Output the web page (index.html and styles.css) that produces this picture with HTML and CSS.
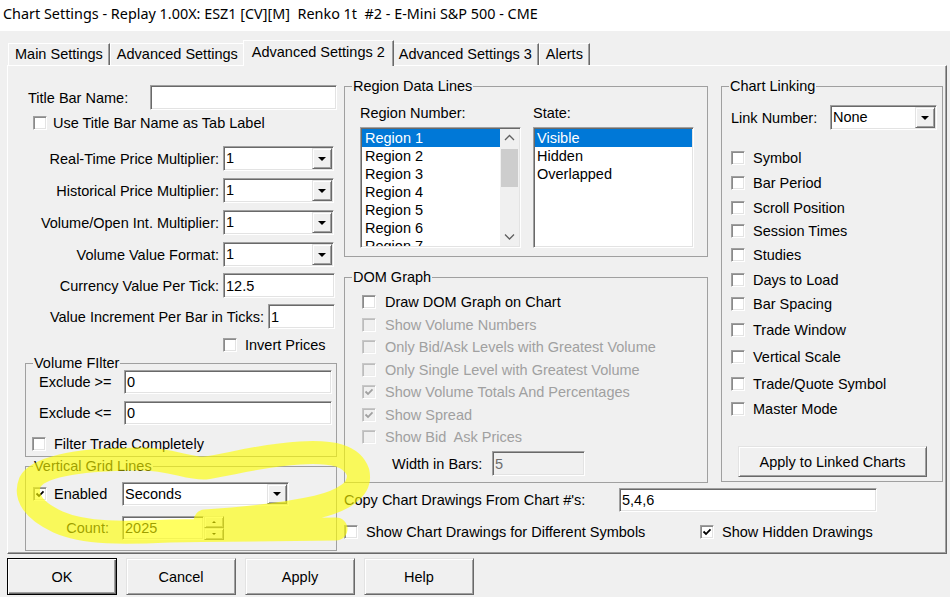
FILE: index.html
```html
<!DOCTYPE html>
<html lang="en">
<head>
<meta charset="utf-8">
<title>Chart Settings</title>
<link rel="stylesheet" href="styles.css">
</head>
<body>
<div class="window">
  <div class="titlebar">Chart Settings - Replay 1.00X: ESZ1 [CV][M]  Renko 1t  #2 - E-Mini S&amp;P 500 - CME</div>

  <div class="tabs">
    <div class="tab">Main Settings</div>
    <div class="tab">Advanced Settings</div>
    <div class="tab active">Advanced Settings 2</div>
    <div class="tab">Advanced Settings 3</div>
    <div class="tab">Alerts</div>
  </div>

  <div class="panel">
    <div class="col-left">
      <div class="title-row"><span class="title-lbl">Title Bar Name:</span><span class="edit title-edit"></span></div>
      <div class="chk use-title"><span class="cb"></span><span>Use Title Bar Name as Tab Label</span></div>

      <div class="frow first"><span class="rlbl">Real-Time Price Multiplier:</span><span class="combo mult"><span class="val">1</span><span class="drop"><i class="tri"></i></span></span></div>
      <div class="frow"><span class="rlbl">Historical Price Multiplier:</span><span class="combo mult"><span class="val">1</span><span class="drop"><i class="tri"></i></span></span></div>
      <div class="frow"><span class="rlbl">Volume/Open Int. Multiplier:</span><span class="combo mult"><span class="val">1</span><span class="drop"><i class="tri"></i></span></span></div>
      <div class="frow"><span class="rlbl">Volume Value Format:</span><span class="combo mult"><span class="val">1</span><span class="drop"><i class="tri"></i></span></span></div>
      <div class="frow tight"><span class="rlbl">Currency Value Per Tick:</span><span class="edit cur">12.5</span></div>
      <div class="frow tight"><span class="rlbl wide">Value Increment Per Bar in Ticks:</span><span class="edit inc">1</span></div>
      <div class="chk invert"><span class="cb"></span><span>Invert Prices</span></div>

      <div class="group vfilter">
        <div class="gtitle">Volume FIlter</div>
        <div class="xrow"><span class="xlbl">Exclude &gt;=</span><span class="edit xedit">0</span></div>
        <div class="xrow second"><span class="xlbl">Exclude &lt;=</span><span class="edit xedit">0</span></div>
        <div class="chk ftrade"><span class="cb"></span><span>Filter Trade Completely</span></div>
      </div>

      <div class="group vgrid">
        <div class="gtitle">Vertical Grid Lines</div>
        <div class="grow enabled">
          <span class="cb on"><svg width="10" height="10" viewBox="0 0 10 10"><path d="M1.5 4.5 L4 7 L8.5 2.3" fill="none" stroke="#000" stroke-width="1.8"/></svg></span>
          <span class="glbl">Enabled</span>
          <span class="combo secs"><span class="val">Seconds</span><span class="drop"><i class="tri"></i></span></span>
        </div>
        <div class="grow count">
          <span class="clbl">Count:</span>
          <span class="spin"><span class="edit sedit">2025</span><span class="sbtns"><span class="sb"><i class="tri-up"></i></span><span class="sb"><i class="tri-dn"></i></span></span></span>
        </div>
      </div>
    </div>

    <div class="col-right">
      <div class="upper">
        <div class="mid">
          <div class="group region">
            <div class="gtitle">Region Data Lines</div>
            <div class="rlabels"><span class="rn">Region Number:</span><span>State:</span></div>
            <div class="lists">
              <div class="edit listbox">
                <div class="items">
                  <div class="item sel">Region 1</div>
                  <div class="item">Region 2</div>
                  <div class="item">Region 3</div>
                  <div class="item">Region 4</div>
                  <div class="item">Region 5</div>
                  <div class="item">Region 6</div>
                  <div class="item">Region 7</div>
                </div>
                <div class="vscroll">
                  <span class="sbar-btn"><svg width="19" height="19" viewBox="0 0 19 19"><path d="M5 11 L9.5 6.5 L14 11" fill="none" stroke="#606060" stroke-width="1.3"/></svg></span>
                  <span class="thumb"></span>
                  <span class="sbar-fill"></span>
                  <span class="sbar-btn"><svg width="19" height="19" viewBox="0 0 19 19"><path d="M5 7.5 L9.5 12 L14 7.5" fill="none" stroke="#606060" stroke-width="1.3"/></svg></span>
                </div>
              </div>
              <div class="edit listbox">
                <div class="items state">
                  <div class="item sel">Visible</div>
                  <div class="item">Hidden</div>
                  <div class="item">Overlapped</div>
                </div>
              </div>
            </div>
          </div>

          <div class="group dom">
            <div class="gtitle">DOM Graph</div>
            <div class="chk drow first"><span class="cb"></span><span>Draw DOM Graph on Chart</span></div>
            <div class="chk drow dis"><span class="cb"></span><span>Show Volume Numbers</span></div>
            <div class="chk drow dis"><span class="cb"></span><span>Only Bid/Ask Levels with Greatest Volume</span></div>
            <div class="chk drow dis"><span class="cb"></span><span>Only Single Level with Greatest Volume</span></div>
            <div class="chk drow dis"><span class="cb"><svg width="10" height="10" viewBox="0 0 10 10"><path d="M1.5 4.5 L4 7 L8.5 2.3" fill="none" stroke="#a0a0a0" stroke-width="1.8"/></svg></span><span>Show Volume Totals And Percentages</span></div>
            <div class="chk drow dis"><span class="cb"><svg width="10" height="10" viewBox="0 0 10 10"><path d="M1.5 4.5 L4 7 L8.5 2.3" fill="none" stroke="#a0a0a0" stroke-width="1.8"/></svg></span><span>Show Spread</span></div>
            <div class="chk drow dis"><span class="cb"></span><span>Show Bid  Ask Prices</span></div>
            <div class="wrow"><span class="wlbl">Width in Bars:</span><span class="edit wedit">5</span></div>
          </div>
        </div>

        <div class="group linking">
          <div class="gtitle">Chart Linking</div>
          <div class="lnrow"><span class="lnlbl">Link Number:</span><span class="combo link"><span class="val">None</span><span class="drop"><i class="tri"></i></span></span></div>
          <div class="lrows">
            <div class="chk lrow"><span class="cb"></span><span>Symbol</span></div>
            <div class="chk lrow"><span class="cb"></span><span>Bar Period</span></div>
            <div class="chk lrow"><span class="cb"></span><span>Scroll Position</span></div>
            <div class="chk lrow"><span class="cb"></span><span>Session Times</span></div>
            <div class="chk lrow"><span class="cb"></span><span>Studies</span></div>
            <div class="chk lrow"><span class="cb"></span><span>Days to Load</span></div>
            <div class="chk lrow"><span class="cb"></span><span>Bar Spacing</span></div>
            <div class="chk lrow"><span class="cb"></span><span>Trade Window</span></div>
            <div class="chk lrow"><span class="cb"></span><span>Vertical Scale</span></div>
            <div class="chk lrow"><span class="cb"></span><span>Trade/Quote Symbol</span></div>
            <div class="chk lrow"><span class="cb"></span><span>Master Mode</span></div>
          </div>
          <div class="btn apply-linked">Apply to Linked Charts</div>
        </div>
      </div>

      <div class="copy-row"><span class="copy-lbl">Copy Chart Drawings From Chart #'s:</span><span class="edit copy-edit">5,4,6</span></div>
      <div class="draw-row">
        <div class="chk diff"><span class="cb"></span><span>Show Chart Drawings for Different Symbols</span></div>
        <div class="chk"><span class="cb"><svg width="10" height="10" viewBox="0 0 10 10"><path d="M1.5 4.5 L4 7 L8.5 2.3" fill="none" stroke="#000" stroke-width="1.8"/></svg></span><span>Show Hidden Drawings</span></div>
      </div>
    </div>
  </div>

  <div class="buttons">
    <div class="btn default">OK</div>
    <div class="btn">Cancel</div>
    <div class="btn">Apply</div>
    <div class="btn">Help</div>
  </div>

  <svg class="marker" width="950" height="597" viewBox="0 0 950 597">
    <path d="M 336 529 C 295 530, 230 530, 170 531 C 125 533, 85 534, 58 522 C 34 511, 24 497, 30 482 C 40 464, 90 459, 140 459 C 172 459, 188 469, 205 468 C 228 465, 262 455, 300 453 C 334 451, 352 456, 358 472 C 362 490, 342 501, 317 507 C 290 513, 250 518, 205 521" fill="none" stroke="rgb(255,255,0)" stroke-opacity="0.62" stroke-width="23" stroke-linecap="round" stroke-linejoin="round"/>
  </svg>
</div>
</body>
</html>
```

FILE: styles.css
```css
* { box-sizing: border-box; }
html, body { margin: 0; padding: 0; }
body {
  width: 950px;
  height: 597px;
  overflow: hidden;
  background: #f0f0f0;
  font-family: "Liberation Sans", Arial, sans-serif;
  font-size: 14.5px;
  color: #000;
}
.window { position: relative; width: 950px; height: 597px; background: #f0f0f0; }

.titlebar {
  height: 31px;
  background: #fff;
  padding-left: 3px;
  font-family: "Noto Sans", "Liberation Sans", sans-serif;
  font-size: 14.4px;
  line-height: 28px;
  white-space: pre;
}

/* tabs */
.tabs {
  position: relative;
  z-index: 2;
  display: flex;
  align-items: flex-end;
  height: 34px;
  padding: 12px 0 0 8px;
}
.tab {
  height: 22px;
  padding: 0 6px;
  line-height: 20px;
  white-space: nowrap;
  background: #f0f0f0;
  border-top: 1px solid #fff;
  border-left: 1px solid #fff;
  border-right: 1px solid #696969;
  box-shadow: inset -1px 0 0 #a0a0a0;
}
.tab.active {
  position: relative;
  z-index: 3;
  height: 26px;
  margin: 0 -2px -1px;
  padding: 0 8px;
  line-height: 22px;
}

/* panel */
.panel {
  display: flex;
  width: 940px;
  height: 489px;
  margin-left: 7px;
  border: 1px solid;
  border-color: #fff #696969 #696969 #fff;
  box-shadow: inset -1px -1px 0 #a0a0a0;
}

/* common controls */
.edit, .combo, .listbox {
  display: flex;
  align-items: center;
  background: #fff;
  border: 1px solid;
  border-color: #a0a0a0 #fff #fff #a0a0a0;
  box-shadow: inset 1px 1px 0 #696969, inset -1px -1px 0 #e3e3e3;
  white-space: nowrap;
}
.edit { padding: 0 2px 0 2px; }
.combo { height: 25px; padding: 1px; }
.combo .val { flex: 1; padding-left: 1px; line-height: 21px; }
.drop, .sb, .btn {
  background: #f0f0f0;
  border: 1px solid;
  border-color: #e3e3e3 #696969 #696969 #e3e3e3;
  box-shadow: inset 1px 1px 0 #fff, inset -1px -1px 0 #a0a0a0;
}
.drop {
  width: 20px;
  height: 21px;
  display: flex;
  align-items: center;
  justify-content: center;
}
.tri {
  display: block;
  width: 0;
  height: 0;
  border-left: 4px solid transparent;
  border-right: 4px solid transparent;
  border-top: 4px solid #000;
}
.tri-up, .tri-dn {
  display: block;
  width: 0;
  height: 0;
  border-left: 2px solid transparent;
  border-right: 2px solid transparent;
}
.tri-up { border-bottom: 2px solid #000; }
.tri-dn { border-top: 2px solid #000; }

.chk { display: flex; align-items: center; white-space: pre; }
.cb {
  flex: 0 0 14px;
  width: 14px;
  height: 14px;
  display: flex;
  align-items: center;
  justify-content: center;
  background: #fff;
  border: 1px solid;
  border-color: #a0a0a0 #fff #fff #a0a0a0;
  box-shadow: inset 1px 1px 0 #8a8a8a, inset -1px -1px 0 #e3e3e3;
}
.chk .cb + span { margin-left: 8px; }
.dis { color: #a0a0a0; }
.dis .cb {
  background: #f0f0f0;
  border-color: #c8c8c8 #fff #fff #c8c8c8;
  box-shadow: inset 1px 1px 0 #bcbcbc, inset -1px -1px 0 #ececec;
}

.group { border: 1px solid #a0a0a0; }
.gtitle {
  width: max-content;
  height: 14px;
  line-height: 14px;
  margin: -8px 0 0 7px;
  padding: 0 1px;
  background: #f0f0f0;
  white-space: nowrap;
}

.btn {
  display: flex;
  align-items: center;
  justify-content: center;
  white-space: nowrap;
}

/* left column */
.col-left {
  flex: 0 0 330px;
  padding-left: 17px;
  display: flex;
  flex-direction: column;
}
.title-row { display: flex; align-items: center; height: 25px; margin-top: 19px; }
.title-lbl { width: 125px; padding-left: 3px; }
.title-edit { width: 187px; height: 25px; }
.use-title { height: 16px; margin-top: 5px; padding-left: 8px; }
.use-title .cb + span { margin-left: 6px; }

.frow { display: flex; align-items: center; height: 25px; margin-top: 7px; }
.frow.first { margin-top: 15px; }
.frow.tight { margin-top: 6px; }
.rlbl { width: 194px; margin-right: 4px; text-align: right; white-space: nowrap; }
.rlbl.wide { width: 239px; }
.combo.mult { width: 111px; }
.edit.cur { width: 112px; height: 25px; }
.edit.inc { width: 67px; height: 25px; }
.invert { height: 14px; margin-top: 9px; padding-left: 198px; }

.vfilter { width: 312px; margin-top: 11px; padding-bottom: 4px; }
.xrow { display: flex; align-items: center; height: 24px; padding-left: 13px; }
.xrow.second { margin-top: 7px; }
.xlbl { width: 85px; white-space: pre; }
.xedit { width: 208px; height: 24px; }
.ftrade { height: 16px; margin-top: 11px; padding-left: 6px; }

.vgrid { width: 312px; margin-top: 9px; padding-bottom: 10px; }
.grow { display: flex; align-items: center; height: 24px; }
.grow.enabled { margin-top: 9px; padding-left: 7px; }
.glbl { width: 68px; margin-left: 7px; }
.combo.secs { width: 167px; height: 24px; }
.combo.secs .drop { height: 20px; }
.grow.count { margin-top: 10px; }
.clbl { width: 83px; margin-right: 13px; text-align: right; }
.spin { display: flex; width: 102px; height: 24px; }
.sedit { flex: 1; height: 24px; }
.sbtns { width: 20px; display: flex; flex-direction: column; }
.sb { flex: 1; display: flex; align-items: center; justify-content: center; }

/* right side */
.col-right {
  flex: 0 0 599px;
  margin-left: 6px;
  display: flex;
  flex-direction: column;
}
.upper { display: flex; align-items: flex-start; }
.mid { width: 364px; display: flex; flex-direction: column; }

.region { margin-top: 20px; }
.rlabels { display: flex; height: 16px; line-height: 16px; margin-top: 12px; padding-left: 15px; }
.rlabels .rn { width: 173px; }
.lists { display: flex; gap: 12px; margin-top: 6px; padding: 0 0 8px 15px; }
.listbox {
  width: 161px;
  height: 121px;
  padding: 1px;
  align-items: stretch;
  overflow: hidden;
}
.items { flex: 1; overflow: hidden; }
.item { height: 18px; line-height: 18px; padding-left: 3px; }
.items.state .item { padding-left: 2px; }
.item.sel { background: #0078d7; color: #fff; }
.vscroll { width: 19px; display: flex; flex-direction: column; background: #f0f0f0; }
.sbar-btn { height: 19px; flex: 0 0 19px; }
.sbar-btn svg { display: block; }
.thumb { height: 38px; flex: 0 0 38px; margin: 1px 1px 0 1px; background: #cdcdcd; }
.sbar-fill { flex: 1; }

.dom { margin-top: 20px; padding-bottom: 6px; }
.drow { height: 22.5px; padding-left: 17px; }
.drow.first { margin-top: 7px; }
.drow .cb + span { margin-left: 9px; }
.wrow { display: flex; align-items: center; height: 25px; margin-top: 2.5px; padding-left: 47px; }
.wlbl { width: 100px; }
.wedit { width: 93px; height: 25px; background: #f0f0f0; color: #6d6d6d; }

.linking { width: 222px; margin: 20px 0 0 13px; padding-bottom: 4px; }
.lnrow { display: flex; align-items: center; height: 25px; margin-top: 12px; padding-left: 9px; }
.lnlbl { width: 99px; }
.combo.link { width: 107px; }
.lrows { margin-top: 15.5px; }
.lrow { height: 25px; padding-left: 9px; }
.lrow:nth-child(3) { height: 24px; }
.lrow:nth-child(4) { height: 23px; }
.lrow:nth-child(6) { height: 24px; }
.lrow:nth-child(8) { height: 27px; }
.lrow:nth-child(9) { height: 27px; }
.lrow:nth-child(10) { height: 26px; }
.lrow:nth-child(11) { height: 24px; }
.apply-linked { width: 189px; height: 31px; margin: 25.5px 0 0 16px; }

.copy-row { display: flex; align-items: center; height: 24px; margin-top: 5px; }
.copy-lbl { width: 275px; }
.copy-edit { width: 258px; height: 24px; }
.draw-row { display: flex; align-items: center; height: 14px; margin-top: 13px; }
.draw-row .diff { width: 356px; }

/* bottom buttons */
.buttons { display: flex; gap: 9px; margin-top: 4px; padding-left: 7px; }
.buttons .btn { width: 110px; height: 37px; }
.btn.default {
  border: 1px solid #000;
  box-shadow: inset 1px 1px 0 #fff, inset -1px -1px 0 #696969, inset -2px -2px 0 #a0a0a0;
}

/* hand-drawn highlighter mark lying over the dialog */
.marker {
  position: absolute;
  left: 0;
  top: 0;
  pointer-events: none;
}
```
